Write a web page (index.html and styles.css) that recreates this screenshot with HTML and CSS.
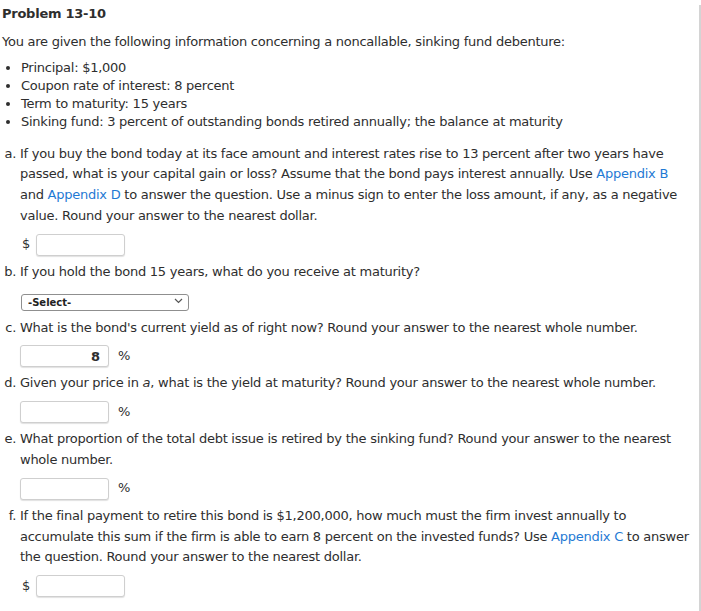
FILE: index.html
```html
<!DOCTYPE html>
<html>
<head>
<meta charset="utf-8">
<link rel="stylesheet" href="styles.css">
</head>
<body>
<div class="page">
  <h1 class="title">Problem 13-10</h1>
  <p class="intro">You are given the following information concerning a noncallable, sinking fund debenture:</p>
  <ul class="facts">
    <li>Principal: $1,000</li>
    <li>Coupon rate of interest: 8 percent</li>
    <li>Term to maturity: 15 years</li>
    <li>Sinking fund: 3 percent of outstanding bonds retired annually; the balance at maturity</li>
  </ul>
  <ol class="questions">
    <li>
      <div class="q">If you buy the bond today at its face amount and interest rates rise to 13 percent after two years have passed, what is your capital gain or loss? Assume that the bond pays interest annually. Use <a class="link" href="#">Appendix B</a> and <a class="link" href="#">Appendix D</a> to answer the question. Use a minus sign to enter the loss amount, if any, as a negative value. Round your answer to the nearest dollar.</div>
      <div class="answer"><span class="unit-pre">$</span><input class="box" type="text" value=""></div>
    </li>
    <li>
      <div class="q">If you hold the bond 15 years, what do you receive at maturity?</div>
      <div class="answer"><div class="select-wrap"><select class="select"><option>-Select-</option></select><svg class="chev" width="9" height="6" viewBox="0 0 9 6"><path d="M1 1 L4.5 4.5 L8 1" fill="none" stroke="#555" stroke-width="1.2"/></svg></div></div>
    </li>
    <li>
      <div class="q">What is the bond's current yield as of right now? Round your answer to the nearest whole number.</div>
      <div class="answer"><input class="box" type="text" value="8"><span class="unit-post">%</span></div>
    </li>
    <li>
      <div class="q">Given your price in <i>a</i>, what is the yield at maturity? Round your answer to the nearest whole number.</div>
      <div class="answer"><input class="box" type="text" value=""><span class="unit-post">%</span></div>
    </li>
    <li>
      <div class="q">What proportion of the total debt issue is retired by the sinking fund? Round your answer to the nearest whole number.</div>
      <div class="answer"><input class="box" type="text" value=""><span class="unit-post">%</span></div>
    </li>
    <li>
      <div class="q">If the final payment to retire this bond is $1,200,000, how much must the firm invest annually to accumulate this sum if the firm is able to earn 8 percent on the invested funds? Use <a class="link" href="#">Appendix C</a> to answer the question. Round your answer to the nearest dollar.</div>
      <div class="answer"><span class="unit-pre">$</span><input class="box" type="text" value=""></div>
    </li>
  </ol>
</div>
</body>
</html>
```
FILE: styles.css
```css
html, body {
  margin: 0;
  padding: 0;
  background: #fff;
}
body {
  font-family: "DejaVu Sans", Verdana, sans-serif;
  font-size: 13px;
  letter-spacing: -0.25px;
  color: #2e2e2e;
}
.page {
  width: 697px;
  min-height: 611px;
  padding-left: 2px;
  border-right: 2px solid #d4d4d4;
  box-sizing: content-box;
}
.title {
  font-size: 13px;
  font-weight: bold;
  line-height: 18px;
  margin: 5px 0 0 0;
  color: #2e2e2e;
}
.intro {
  line-height: 18px;
  margin: 10px 0 0 0;
}
.facts {
  margin: 8px 0 0 0;
  padding-left: 19px;
  line-height: 18px;
}
.questions {
  list-style: lower-alpha;
  margin: 12.6px 0 0 0;
  padding: 0 6px 0 18px;
  line-height: 20.8px;
}
.q {
  line-height: 20.8px;
}
.link {
  color: #1f7ad4;
  text-decoration: none;
}
.answer {
  display: flex;
  align-items: center;
  height: 22px;
  margin: 7px 0 6px 0;
}
.unit-pre {
  width: 16px;
  box-sizing: border-box;
  padding-left: 2px;
}
.unit-post {
  margin-left: 9px;
}
.box {
  width: 89px;
  height: 22px;
  box-sizing: border-box;
  border: 1px solid #cfcfcf;
  border-radius: 3px;
  box-shadow: 0 1px 1px rgba(0,0,0,0.12);
  font-family: "DejaVu Sans", Verdana, sans-serif;
  font-size: 13px;
  font-weight: bold;
  color: #2e2e2e;
  text-align: right;
  padding: 0 8px;
  margin: 0;
  background: #fff;
}
.select-wrap {
  position: relative;
  width: 168px;
  height: 17px;
  margin-left: 1px;
}
.select {
  appearance: none;
  -webkit-appearance: none;
  width: 168px;
  height: 17px;
  box-sizing: border-box;
  border: 1px solid #8f8f8f;
  border-radius: 3px;
  background: #fff;
  font-family: "DejaVu Sans", Verdana, sans-serif;
  font-size: 10px;
  font-weight: bold;
  letter-spacing: 0;
  color: #222;
  padding: 0 0 0 6px;
  margin: 0;
}
.chev {
  position: absolute;
  right: 6px;
  top: 6px;
}
```
